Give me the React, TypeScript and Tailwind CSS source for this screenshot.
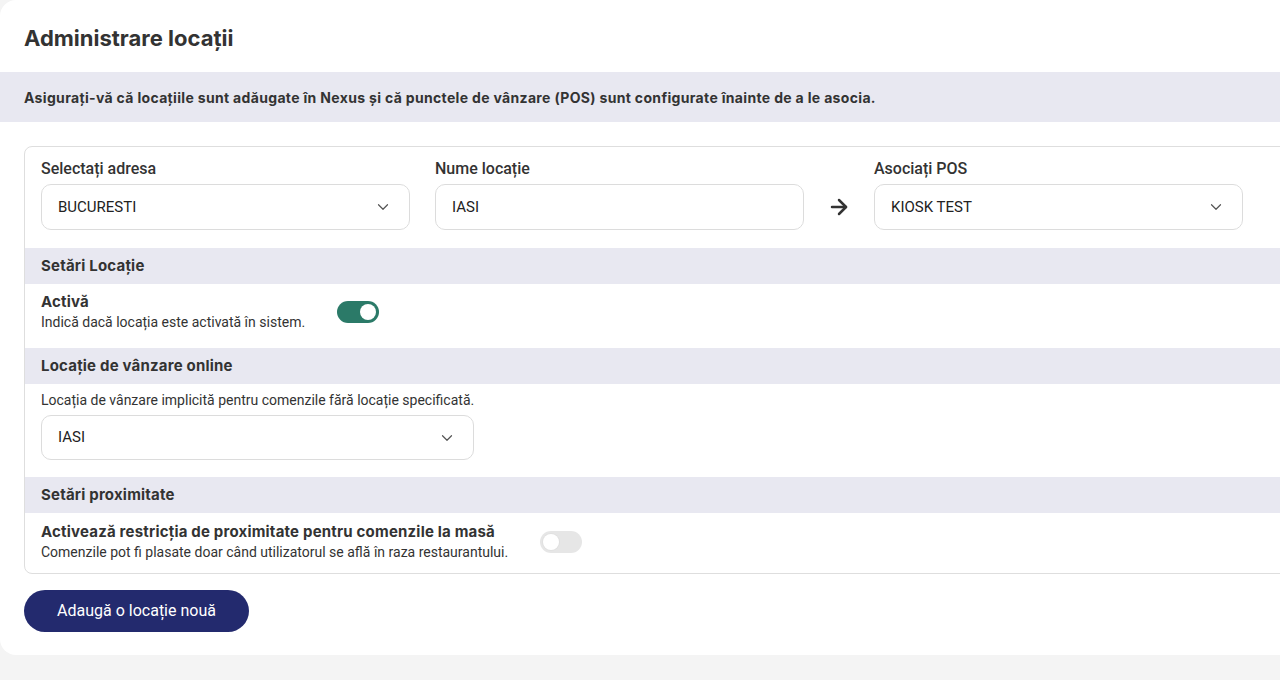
import { useState } from "react";
import { ChevronDown, ArrowRight } from "lucide-react";

const roboto = { fontFamily: "Roboto, 'Noto Sans', sans-serif" };
const inter = { fontFamily: "Inter, 'Noto Sans', sans-serif" };

function Toggle({ on, onChange }: { on: boolean; onChange: () => void }) {
  return (
    <button
      type="button"
      onClick={onChange}
      className={`relative h-[22px] w-[42px] shrink-0 rounded-full transition-colors ${
        on ? "bg-[#2b7a68]" : "bg-[#e6e6e6]"
      }`}
    >
      <span
        className={`absolute top-[3px] h-4 w-4 rounded-full bg-white transition-all ${
          on ? "left-[23px]" : "left-[3px] shadow-[0_0_0_1px_#e0e0e0]"
        }`}
      />
    </button>
  );
}

function SelectBox({ value, className }: { value: string; className: string }) {
  return (
    <div
      className={`flex items-center justify-between rounded-[10px] border border-[#dcdcdc] bg-white pl-4 pr-[17px] ${className}`}
    >
      <span className="text-[15px] text-[#222]">{value}</span>
      <ChevronDown size={18} strokeWidth={1.6} className="text-[#555]" />
    </div>
  );
}

function SectionHeader({ title }: { title: string }) {
  return (
    <div
      className="flex h-9 items-center bg-[#e8e8f1] px-4 text-[15px] font-bold tracking-[0.2px] text-[#333]"
      style={inter}
    >
      {title}
    </div>
  );
}

export default function App() {
  const [active, setActive] = useState(true);
  const [proximity, setProximity] = useState(false);

  return (
    <div className="min-h-screen w-full overflow-hidden bg-[#f4f4f4]" style={roboto}>
      <div className="w-[1320px] rounded-2xl bg-white pb-[23px]">
        <h1 className="px-6 pt-[24px] pb-[20px] text-[22px] leading-7 font-bold text-[#333]" style={inter}>
          Administrare locații
        </h1>

        <div
          className="flex h-[50px] items-center bg-[#e8e8f1] px-6 text-[14px] font-bold tracking-[0.33px] text-[#333]"
          style={inter}
        >
          Asigurați-vă că locațiile sunt adăugate în Nexus și că punctele de vânzare (POS) sunt
          configurate înainte de a le asocia.
        </div>

        <div className="mx-6 mt-6 overflow-hidden rounded-lg border border-[#dedede]">
          {/* address / name / POS row */}
          <div className="flex items-end px-4 pt-3 pb-[18px]">
            <div className="flex w-[369px] flex-col gap-[5px]">
              <label className="text-[16px] leading-5 font-medium text-[#333]">Selectați adresa</label>
              <SelectBox value="BUCURESTI" className="h-[46px]" />
            </div>
            <div className="ml-[25px] flex w-[369px] flex-col gap-[5px]">
              <label className="text-[16px] leading-5 font-medium text-[#333]">Nume locație</label>
              <input
                defaultValue="IASI"
                className="h-[46px] rounded-[10px] border border-[#dcdcdc] px-4 text-[15px] text-[#222] outline-none"
              />
            </div>
            <div className="flex h-[46px] w-[70px] items-center justify-center">
              <ArrowRight size={24} strokeWidth={2.5} className="text-[#333]" />
            </div>
            <div className="flex w-[369px] flex-col gap-[5px]">
              <label className="text-[16px] leading-5 font-medium text-[#333]">Asociați POS</label>
              <SelectBox value="KIOSK TEST" className="h-[46px]" />
            </div>
          </div>

          <SectionHeader title="Setări Locație" />
          <div className="flex items-center gap-8 px-4 pt-2 pb-4">
            <div>
              <div className="text-[15px] leading-5 font-bold tracking-[0.2px] text-[#333]" style={inter}>
                Activă
              </div>
              <div className="text-[14px] leading-5 text-[#333]">
                Indică dacă locația este activată în sistem.
              </div>
            </div>
            <Toggle on={active} onChange={() => setActive(!active)} />
          </div>

          <SectionHeader title="Locație de vânzare online" />
          <div className="px-4 pt-[6px] pb-[17px]">
            <div className="mb-[5px] text-[14px] leading-5 text-[#333]">
              Locația de vânzare implicită pentru comenzile fără locație specificată.
            </div>
            <SelectBox value="IASI" className="h-[45px] w-[433px]" />
          </div>

          <SectionHeader title="Setări proximitate" />
          <div className="flex items-center gap-8 px-4 pt-[9px] pb-[11px]">
            <div>
              <div className="text-[15px] leading-5 font-bold tracking-[0.2px] text-[#333]" style={inter}>
                Activează restricția de proximitate pentru comenzile la masă
              </div>
              <div className="text-[14px] leading-5 text-[#333]">
                Comenzile pot fi plasate doar când utilizatorul se află în raza restaurantului.
              </div>
            </div>
            <Toggle on={proximity} onChange={() => setProximity(!proximity)} />
          </div>
        </div>

        <button
          type="button"
          className="ml-6 mt-4 h-[42px] w-[225px] rounded-full bg-[#232a6e] text-[16px] text-white"
        >
          Adaugă o locație nouă
        </button>
      </div>
    </div>
  );
}
